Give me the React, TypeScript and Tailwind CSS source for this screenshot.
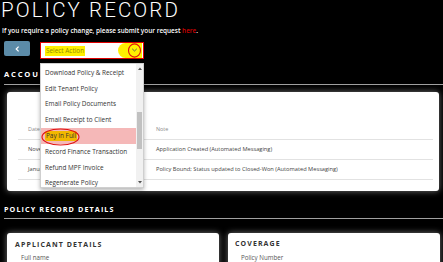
import React from "react";

const items = [
  "Download Policy & Receipt",
  "Edit Tenant Policy",
  "Email Policy Documents",
  "Email Receipt to Client",
  "Pay In Full",
  "Record Finance Transaction",
  "Refund MPF Invoice",
  "Regenerate Policy",
];

export default function App() {
  return (
    <div className="w-[443px] h-[262px] overflow-hidden bg-black font-['Open_Sans',sans-serif] text-white">
      <h1 className="pl-[1px] font-['Roboto',sans-serif] font-light text-[20.5px] leading-[20px] tracking-[2.1px] text-white">
        POLICY RECORD
      </h1>
      <p className="mt-[6px] pl-[2px] text-[6.4px] leading-[10px] font-semibold text-white">
        If you require a policy change, please submit your request <span className="text-[#d10000]">here</span>.
      </p>
      <div className="mt-[5px] flex items-start pl-[4px] gap-[10px]">
        <button className="w-[26px] h-[15px] rounded-[2px] bg-[#5b8ba8] flex items-center justify-center">
          <svg width="5" height="6" viewBox="0 0 5 6">
            <path d="M3.6 0.6 L1.2 3 L3.6 5.4" fill="none" stroke="white" strokeWidth="1.2" />
          </svg>
        </button>
        <div className="relative mt-[1px] w-[104px] h-[17px] bg-white border border-[#e00000] z-10">
          <div className="absolute left-[4px] top-[3px] h-[10px] px-[1px] bg-[#fff000] text-[6.4px] leading-[10px] text-[#8e8a00]">
            Select Action
          </div>
          <div className="absolute left-[77px] top-0 w-[24px] h-[15px] rounded-l-full bg-[#fff000]" />
          <svg className="absolute left-[90px] top-[4px]" width="7" height="6" viewBox="0 0 7 6">
            <path d="M1.2 1.8 L3.5 4 L5.8 1.8" fill="none" stroke="#555" strokeWidth="0.9" />
          </svg>
          <svg className="absolute left-[86px] top-0" width="15" height="15" viewBox="0 0 15 15">
            <ellipse cx="7.5" cy="7.5" rx="6" ry="6.6" fill="none" stroke="#e01010" strokeWidth="1.1" />
          </svg>
          <div className="absolute left-[-1px] top-[20px] w-[104px] h-[125px] bg-white border border-[#cfcfcf] shadow-[0_2px_4px_rgba(0,0,0,0.3)] flex overflow-hidden">
            <div className="flex-1 pt-[1px]">
              {items.map((it) => {
                const pay = it === "Pay In Full";
                return (
                  <div
                    key={it}
                    className={`relative h-[15.8px] pl-[4px] flex items-center text-[6.4px] leading-[10px] text-[#333] ${pay ? "bg-[#f5b8b8]" : ""}`}
                  >
                    {pay ? (
                      <>
                        <span className="bg-[#f2b800] px-[1px] rounded-[2px]">{it}</span>
                        <svg className="absolute left-[0px] top-[0px]" width="40" height="18" viewBox="0 0 40 18">
                          <ellipse cx="19.5" cy="9" rx="18.5" ry="8" fill="none" stroke="#e01010" strokeWidth="1.1" />
                        </svg>
                      </>
                    ) : (
                      <span>{it}</span>
                    )}
                  </div>
                );
              })}
            </div>
            <div className="relative w-[7px] h-full bg-[#f1f1f1]">
              <svg className="absolute left-[1.5px] top-[3px]" width="4" height="3" viewBox="0 0 4 3">
                <path d="M0 3 L2 0.5 L4 3 Z" fill="#505050" />
              </svg>
              <div className="absolute left-[1px] top-[48px] w-[5px] h-[37px] bg-[#c1c1c1]" />
              <svg className="absolute left-[1.5px] bottom-[3px]" width="4" height="3" viewBox="0 0 4 3">
                <path d="M0 0 L4 0 L2 2.5 Z" fill="#505050" />
              </svg>
            </div>
          </div>
        </div>
      </div>

      <div className="mt-[10px] ml-[4px] pb-[5px] border-b border-[#a0a0a0]">
        <div className="text-[7.6px] leading-[10px] font-bold tracking-[1.8px] text-white">ACCOUNT NOTES</div>
      </div>

      <div className="mt-[7px] ml-[7px] mr-[4px] h-[99px] bg-white rounded-[3px] shadow-[0_0_6px_rgba(255,255,255,0.45)] pt-[28px] pl-[11px] pr-[6px]">
        <div className="flex h-[20px] items-center border-b border-[#e2e2e2] text-[5.4px] text-[#8a8a8a]">
          <div className="w-[138px] pl-[10px]">Date</div>
          <div>Note</div>
        </div>
        <div className="flex h-[20px] items-center border-b border-[#e2e2e2] text-[5.7px] text-[#444]">
          <div className="w-[138px] pl-[10px]">November 12, 2024</div>
          <div>Application Created (Automated Messaging)</div>
        </div>
        <div className="flex h-[20px] items-center border-b border-[#e2e2e2] text-[5.7px] text-[#444]">
          <div className="w-[138px] pl-[10px]">January 3, 2025</div>
          <div>Policy Bound; Status updated to Closed-Won (Automated Messaging)</div>
        </div>
      </div>

      <div className="mt-[13px] ml-[4px] pb-[4px] border-b border-[#a0a0a0]">
        <div className="text-[7.2px] leading-[10px] font-bold tracking-[1.1px] text-white">POLICY RECORD DETAILS</div>
      </div>

      <div className="mt-[14px] ml-[7px] mr-[3px] grid grid-cols-2 gap-[9px]">
        <div className="h-[60px] bg-white rounded-[3px] shadow-[0_0_6px_rgba(255,255,255,0.45)] pt-[7px] pl-[8px]">
          <div className="text-[7px] leading-[10px] font-bold tracking-[1.1px] text-[#333]">APPLICANT DETAILS</div>
          <div className="mt-[3px] pl-[6px] text-[6.2px] leading-[9px] text-[#555]">Full name</div>
        </div>
        <div className="h-[60px] bg-white rounded-[3px] shadow-[0_0_6px_rgba(255,255,255,0.45)] pt-[6px] pl-[7px]">
          <div className="text-[7px] leading-[10px] font-bold tracking-[1.1px] text-[#333]">COVERAGE</div>
          <div className="mt-[4px] pl-[6px] text-[6.2px] leading-[9px] text-[#555]">Policy Number</div>
        </div>
      </div>
    </div>
  );
}
